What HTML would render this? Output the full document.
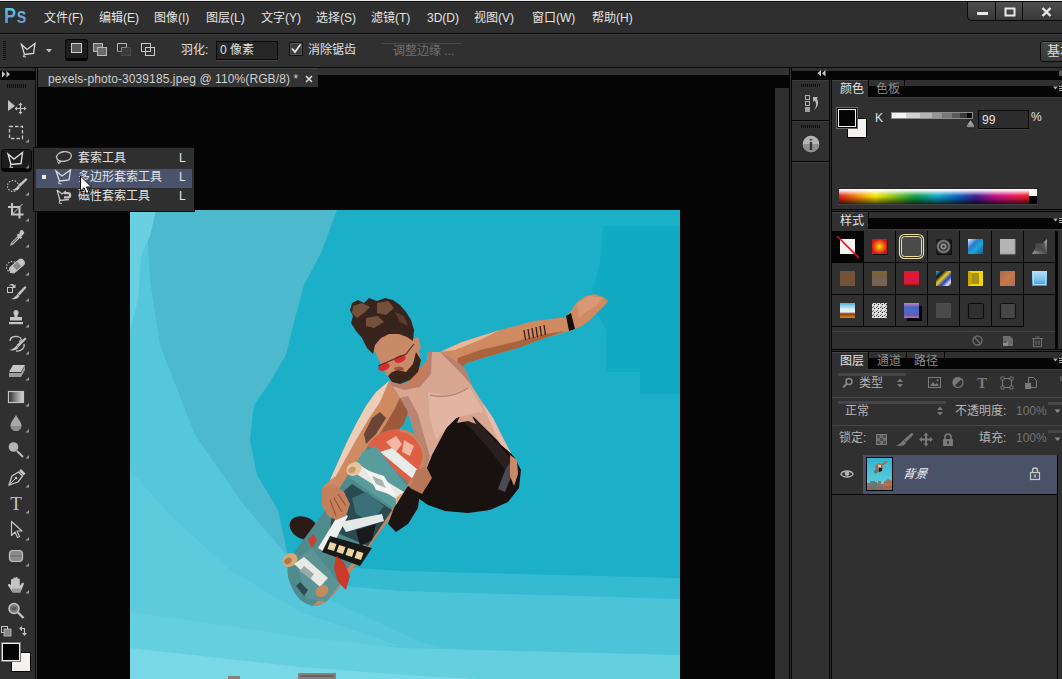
<!DOCTYPE html>
<html lang="zh-CN">
<head>
<meta charset="utf-8">
<title>Photoshop</title>
<style>
*{box-sizing:border-box;margin:0;padding:0}
html,body{width:1062px;height:679px;overflow:hidden;background:#303030}
body{position:relative;font-family:"Liberation Sans","Noto Sans CJK SC",sans-serif;font-size:12px;color:#dcdcdc}
.abs{position:absolute}
#menubar{left:0;top:0;width:1062px;height:34px;background:#2f2f2f;border-top:1px solid #ececec;border-bottom:1px solid #0c0c0c;box-shadow:inset 0 2px 0 #3a3a3a}
#menubar:before{content:"";position:absolute;left:0;top:0;width:100%;height:1px;background:#0a0a0a;z-index:1}
.mi{position:absolute;top:9px;font-size:12px;line-height:16px;color:#e4e4e4;white-space:nowrap}
#ps{left:4px;top:1px;font-size:22px;line-height:28px;font-weight:bold;color:#6aa6d6;letter-spacing:0.5px;transform:scaleX(0.82);transform-origin:0 0;background:linear-gradient(#5cc4de 30%,#6c9edc 55%);-webkit-background-clip:text;background-clip:text;-webkit-text-fill-color:transparent}
#optbar{left:0;top:34px;width:1062px;height:34px;background:#303030;border-bottom:1px solid #0a0a0a;box-shadow:inset 0 1px 0 #3c3c3c}
#toolbar{left:0;top:68px;width:35px;height:611px;background:#303030}
#canvas{left:37px;top:68px;width:753px;height:611px;background:#050505}
#tab{left:38px;top:68px;width:280px;height:19px;background:#333333;border-top:1px solid #484848;color:#cfcfcf;font-size:12px;line-height:21px;padding-left:10px;white-space:nowrap;letter-spacing:0.1px}

/* options bar */
.grip-v{position:absolute;left:3px;top:7px;width:3px;height:20px;background:repeating-linear-gradient(to bottom,#111 0 1px,#303030 1px 2px)}
.ob-lbl{position:absolute;font-size:12px;line-height:16px;color:#e0e0e0;white-space:nowrap}
#feather{left:216px;top:7px;width:62px;height:19px;background:#262626;border:1px solid #080808;box-shadow:0 1px 0 #444;font-size:12px;line-height:17px;padding-left:3px;color:#e0e0e0}
#chk{left:289px;top:8px;width:14px;height:14px;background:#3c3c3c;border:1px solid #111;box-shadow:inset 0 0 0 1px #555}
#refine{left:381px;top:9px;width:80px;height:18px;border-top:1px solid #484848;font-size:12px;line-height:15px;color:#707070;padding-left:12px;white-space:nowrap}
#basic{white-space:nowrap;overflow:hidden;left:1040px;top:7px;width:30px;height:21px;background:linear-gradient(#444,#3a3a3a);border:1px solid #0a0a0a;border-radius:3px;box-shadow:inset 0 1px 0 #5a5a5a;font-size:13px;line-height:18px;padding-left:6px;color:#e0e0e0}
#winctl{left:967px;top:2px;width:96px;height:19px;background:linear-gradient(#4e4e4e,#383838);border:1px solid #0a0a0a;border-top:none;border-radius:0 0 0 5px}
#winctl i{position:absolute;top:0;width:1px;height:18px;background:#0a0a0a}
/* toolbar */
#tb-head{left:0;top:3px;width:35px;height:9px;background:#050505}
.tool{position:absolute;left:0;width:35px;height:26px}
#vline1{left:35px;top:68px;width:1px;height:611px;background:#0a0a0a}
#vline2{left:36px;top:68px;width:1px;height:611px;background:#363636}
/* right dock */
#dock{left:790px;top:68px;width:272px;height:611px;background:#303030}
.blk{position:absolute;background:#050505}
.ptab{position:absolute;font-size:12px;line-height:16px;white-space:nowrap}
.lt{position:absolute;font-size:12px;line-height:16px;color:#b4b4b4;white-space:nowrap}
.fl{font-size:12px;line-height:16px;color:#e4e4e4;white-space:nowrap}
</style>
</head>
<body>
<div id="menubar" class="abs">
  <div id="ps" class="abs">Ps</div>
  <span class="mi" style="left:44px">文件(F)</span>
  <span class="mi" style="left:99px">编辑(E)</span>
  <span class="mi" style="left:154px">图像(I)</span>
  <span class="mi" style="left:206px">图层(L)</span>
  <span class="mi" style="left:261px">文字(Y)</span>
  <span class="mi" style="left:316px">选择(S)</span>
  <span class="mi" style="left:371px">滤镜(T)</span>
  <span class="mi" style="left:427px">3D(D)</span>
  <span class="mi" style="left:474px">视图(V)</span>
  <span class="mi" style="left:532px">窗口(W)</span>
  <span class="mi" style="left:592px">帮助(H)</span>
</div>
<div id="optbar" class="abs">
  <div class="grip-v"></div>
  <svg class="abs" style="left:18px;top:6px" width="36" height="22" viewBox="0 0 36 22">
    <path d="M3.5 4.5 L9 9.5 L17 3.5 L15.5 13.5 L6.5 14.5 Z" fill="none" stroke="#d8d8d8" stroke-width="1.3"/>
    <path d="M6.5 14 L5.5 16.5 L8 17" fill="none" stroke="#c8c8c8" stroke-width="1.1"/>
    <path d="M28 9 h6 l-3 3.5z" fill="#c8c8c8"/>
  </svg>
  <div class="abs" style="left:65px;top:5px;width:23px;height:22px;background:#1d1d1d;border:1px solid #070707;border-bottom:3px solid #050505;border-radius:3px"></div>
  <svg class="abs" style="left:65px;top:5px" width="95" height="22" viewBox="0 0 95 22">
    <rect x="6.5" y="4.500" width="10" height="9" fill="#5a5a5a" stroke="#cfcfcf"/>
    <rect x="28.500" y="4.500" width="9" height="8" fill="#6a6a6a" stroke="#b8b8b8"/>
    <rect x="32.500" y="8.500" width="9" height="8" fill="#6a6a6a" stroke="#b8b8b8"/>
    <rect x="56.500" y="8.500" width="9" height="8" fill="#3c3c3c" stroke="#4a4a4a"/>
    <path d="M52.500 12.500 v-8 h9 v4" fill="none" stroke="#b8b8b8"/>
    <path d="M52.500 12.500 h4 v-4 h5" fill="none" stroke="#8a8a8a"/>
    <rect x="76.500" y="4.500" width="9" height="8" fill="none" stroke="#c8c8c8"/>
    <rect x="80.500" y="8.500" width="9" height="8" fill="none" stroke="#c8c8c8"/>
  </svg>
  <span class="ob-lbl" style="left:181px;top:8px">羽化:</span>
  <div id="feather" class="abs">0 像素</div>
  <div id="chk" class="abs"><svg width="12" height="12" viewBox="0 0 12 12" style="position:absolute;left:0;top:0"><path d="M2 5.500 L5 9 L10.500 1.500" fill="none" stroke="#e6e6e6" stroke-width="1.800"/></svg></div>
  <span class="ob-lbl" style="left:308px;top:8px">消除锯齿</span>
  <div id="refine" class="abs">调整边缘 ...</div>
  <div id="basic" class="abs">基本</div>
</div>
<div id="winctl" class="abs"><i style="left:27px"></i><i style="left:54px"></i>
  <svg width="94" height="18" viewBox="0 0 94 18" style="position:absolute;left:0;top:0">
    <rect x="9" y="10" width="11" height="3" fill="#e8e8e8"/>
    <rect x="37.500" y="6.500" width="9" height="7" fill="none" stroke="#e8e8e8" stroke-width="2"/>
    <path d="M74.500 6 l8 8 M82.500 6 l-8 8" stroke="#e8e8e8" stroke-width="2.400"/>
  </svg>
</div>
<div id="toolbar" class="abs"></div>
<div class="blk" style="left:0;top:71px;width:35px;height:9px"></div>
<div id="vline1" class="abs"></div><div id="vline2" class="abs"></div>
<svg class="abs" style="left:0;top:68px" width="35" height="611" viewBox="0 68 35 611">
<path d="M2 71 v6.500 l3.500 -3.250z M6.500 71 v6.500 l3.500 -3.250z" fill="#c4c4c4"/>
<path d="M7.500 84v4M9.500 84v4M11.500 84v4M13.500 84v4M15.500 84v4M17.500 84v4M19.500 84v4M21.500 84v4M23.500 84v4M25.500 84v4" stroke="#0e0e0e"/>
<!-- move -->
<path d="M8 100 V111 L15 106z" fill="#c4c4c4"/><path d="M20.500 104 v9 M16 108.500 h9" stroke="#c4c4c4" stroke-width="1.200"/><path d="M20.500 102.500 l2 2.500 h-4z M20.500 114.500 l2 -2.500 h-4z M14.500 108.500 l2.500 -2 v4z M26.500 108.500 l-2.500 -2 v4z" fill="#c4c4c4"/>
<!-- marquee -->
<rect x="9.500" y="126.500" width="13" height="12" fill="none" stroke="#c4c4c4" stroke-width="1.300" stroke-dasharray="3.500 2"/><path d="M29 139 v3.500 h-3.500z" fill="#9a9a9a"/>
<!-- lasso active -->
<rect x="1.500" y="149.500" width="30" height="22" rx="3" fill="#1d1d1d" stroke="#070707"/><rect x="2" y="168" width="29" height="3" fill="#050505"/>
<path d="M8 154 L14 159 L22.500 152.500 L21 163.500 L11 164.500 Z" fill="none" stroke="#dcdcdc" stroke-width="1.400"/><path d="M11 164 L10 167 L13 167.500" fill="none" stroke="#cfcfcf" stroke-width="1.100"/><path d="M29 165 v3.500 h-3.500z" fill="#888"/>
<!-- quick select -->
<circle cx="13" cy="186" r="5.500" fill="none" stroke="#c4c4c4" stroke-width="1.100" stroke-dasharray="1.500 1.500"/><path d="M26 178 L27.500 179.500 L20 187 L18 185z" fill="#c4c4c4"/><path d="M18 185.500 L20 187.500 C18.500 190.500 15 191 12 190 C15 189 16.500 187.500 18 185.500z" fill="#c4c4c4"/><path d="M29 192 v3.500 h-3.500z" fill="#9a9a9a"/>
<!-- crop -->
<path d="M12 203 V214.500 H23.500 M8 207 H19.500 V218.500" fill="none" stroke="#c4c4c4" stroke-width="2"/><path d="M12.500 214 L22.500 204" stroke="#c4c4c4" stroke-width="1"/><path d="M29 218 v3.500 h-3.500z" fill="#9a9a9a"/>
<!-- eyedropper -->
<path d="M20 231 a2.300 2.300 0 0 1 3.500 3.300 l-2.300 2.300 l1 1 l-1.500 1.500 l-1 -1 l-6.500 6.500 l-3.200 1.200 l1.200 -3.200 l6.500 -6.500 l-1 -1 l1.500 -1.500 l1 1z" fill="#c4c4c4"/><path d="M17.500 238 l-5.500 5.500" stroke="#303030" stroke-width="1"/><path d="M29 244 v3.500 h-3.500z" fill="#9a9a9a"/>
<!-- healing -->
<circle cx="12" cy="267" r="5.500" fill="none" stroke="#c4c4c4" stroke-width="1.100" stroke-dasharray="1.500 1.500"/><rect x="8" y="262" width="18" height="8" rx="4" fill="#c4c4c4" transform="rotate(-40 17 266)"/><rect x="14" y="263" width="6" height="6" fill="#8a8a8a" transform="rotate(-40 17 266)"/><path d="M29 272 v3.500 h-3.500z" fill="#9a9a9a"/>
<!-- brush -->
<rect x="7.500" y="287.500" width="5" height="5" fill="none" stroke="#c4c4c4"/><path d="M9 286 C10 283.500 13 283.500 14.500 285.500 l1 -1.500 v4 h-4 l1.500 -1 C12 285 10.500 285 9 286z" fill="#c4c4c4"/><path d="M25 286 L26.500 287.500 L19.500 295.500 L17.500 293.500z" fill="#c4c4c4"/><path d="M17.500 294 L19.500 296 C18 299 14.500 299.500 11 299 C14 298 15.500 296.500 17.500 294z" fill="#c4c4c4"/><path d="M29 298 v3.500 h-3.500z" fill="#9a9a9a"/>
<!-- stamp -->
<path d="M16 310 a2.600 2.600 0 0 1 2.600 2.600 c0 1.800 -1.200 2.400 -1.200 4.400 h4.600 v3.500 h-12 v-3.500 h4.600 c0 -2 -1.200 -2.600 -1.200 -4.400 a2.600 2.600 0 0 1 2.600 -2.600z" fill="#c4c4c4"/><rect x="9" y="322" width="14" height="2.200" fill="#c4c4c4"/><path d="M29 324 v3.500 h-3.500z" fill="#9a9a9a"/>
<!-- history brush -->
<path d="M10 341 C10 337 15 335.500 19 337 C22 338 22 341 19 341.500 M24 344 C25 348 21 351.500 16 351" fill="none" stroke="#c4c4c4" stroke-width="1.300"/><path d="M25 337.500 L26.500 339 L18.500 347 L16.500 345z" fill="#c4c4c4"/><path d="M16.500 345.500 L18.500 347.500 C17 350 13.500 351 9 350 C12 349.500 14.500 348 16.500 345.500z" fill="#c4c4c4"/><path d="M29 351 v3.500 h-3.500z" fill="#9a9a9a"/>
<!-- eraser -->
<path d="M13 365 H25 L21 372 H9z" fill="#c4c4c4"/><path d="M9 373 H21 L25 366 V370 L21 377 H9z" fill="#9c9c9c"/><path d="M29 377 v3.500 h-3.500z" fill="#9a9a9a"/>
<!-- gradient -->
<defs><linearGradient id="tg" x1="0" x2="1"><stop offset="0" stop-color="#2a2a2a"/><stop offset="0.500" stop-color="#8a8a8a"/><stop offset="1" stop-color="#d8d8d8"/></linearGradient></defs>
<rect x="8.500" y="391.500" width="15" height="11" fill="url(#tg)" stroke="#c4c4c4" stroke-width="1.200"/><path d="M29 403 v3.500 h-3.500z" fill="#9a9a9a"/>
<!-- blur -->
<path d="M16 415 C18 419 21.500 422 21.500 425.500 a5.500 5.500 0 0 1 -11 0 C10.500 422 14 419 16 415z" fill="#a8a8a8"/><path d="M10.600 426 a5.500 5.500 0 0 0 10.800 0z" fill="#8a8a8a"/><path d="M29 429 v3.500 h-3.500z" fill="#9a9a9a"/>
<!-- dodge -->
<circle cx="13.500" cy="447" r="4.800" fill="#b4b4b4"/><path d="M17 451 L23 457" stroke="#c4c4c4" stroke-width="1.800"/><path d="M29 455 v3.500 h-3.500z" fill="#9a9a9a"/>
<!-- pen -->
<path d="M21 469 L25.500 473.500 L23.500 475.500 L19 471z" fill="#c4c4c4"/><path d="M18.500 472 L22.500 476 L18 482 L9 485 L12 476z" fill="none" stroke="#c4c4c4" stroke-width="1.300"/><path d="M9.500 484.500 L15.500 478.500" stroke="#c4c4c4" stroke-width="1"/><circle cx="16" cy="478" r="1.300" fill="#c4c4c4"/><path d="M29 484 v3.500 h-3.500z" fill="#9a9a9a"/>
<!-- type -->
<text x="16" y="509.500" text-anchor="middle" font-family="'Liberation Serif',serif" font-size="19" fill="#c4c4c4">T</text><path d="M29 510 v3.500 h-3.500z" fill="#9a9a9a"/>
<!-- path select -->
<path d="M11.500 521.500 V535.500 L15 532 L17.500 537.500 L19.500 536.500 L17 531 H22z" fill="#2a2a2a" stroke="#c4c4c4" stroke-width="1.200" stroke-linejoin="round"/><path d="M29 537 v3.500 h-3.500z" fill="#9a9a9a"/>
<!-- shape -->
<rect x="9.500" y="550.500" width="13" height="11" rx="3.500" fill="#8a8a8a" stroke="#c4c4c4" stroke-width="1.200"/><path d="M10 556 h12" stroke="#6a6a6a"/><path d="M29 563 v3.500 h-3.500z" fill="#9a9a9a"/>
<!-- hand -->
<path d="M11 585 V580 a1.100 1.100 0 0 1 2.200 0 V584 V578.500 a1.100 1.100 0 0 1 2.200 0 V584 V578 a1.100 1.100 0 0 1 2.200 0 V584 V579.500 a1.100 1.100 0 0 1 2.200 0 V586 L21.500 583.500 a1.200 1.200 0 0 1 2.300 0.800 L21.500 590 Q20.500 592.500 18 592.500 H14 Q12 592.500 11 590 L8 585.500 a1.200 1.200 0 0 1 2 -1.200z" fill="#c4c4c4"/><rect x="12" y="588.500" width="9" height="4" fill="#9a9a9a"/><path d="M29 590 v3.500 h-3.500z" fill="#9a9a9a"/>
<!-- zoom -->
<circle cx="14" cy="608.500" r="5" fill="#7a7a7a" stroke="#c4c4c4" stroke-width="1.500"/><rect x="11.500" y="607" width="5" height="3" fill="#5a5a5a"/><path d="M18 612.500 L23.500 618" stroke="#c4c4c4" stroke-width="2.400"/>
<!-- default / swap -->
<rect x="1.500" y="626.500" width="6" height="6" fill="#303030" stroke="#c4c4c4"/><rect x="4" y="629" width="7" height="7" fill="#888" stroke="#c4c4c4" stroke-width="0.800"/>
<path d="M21 628.500 h3.500 v5" fill="none" stroke="#c4c4c4" stroke-width="1.200"/><path d="M19 628.500 l3 -2.500 v5z M24.500 636 l-2.500 -3 h5z" fill="#c4c4c4"/>
<!-- fg/bg -->
<rect x="11.500" y="652.500" width="19" height="19" fill="#f4f3f0" stroke="#050505"/>
<rect x="1.500" y="642.500" width="19" height="19" fill="#050505" stroke="#7a7a7a"/><rect x="2.500" y="643.500" width="17" height="17" fill="none" stroke="#f0f0f0"/>
</svg>

<div id="canvas" class="abs"></div>

<!-- canvas chrome -->
<div class="abs" style="left:38px;top:68px;width:751px;height:7px;background:#323232"></div>
<div class="abs" style="left:775px;top:88px;width:14px;height:591px;background:#2e2e2e"></div>
<div class="abs" style="left:0;top:67px;width:1062px;height:1px;background:#080808"></div>
<!-- dock -->
<div id="dock" class="abs"></div>
<div class="blk" style="left:789px;top:68px;width:1px;height:611px"></div>
<div class="blk" style="left:791px;top:68px;width:1px;height:611px"></div>
<div class="abs" style="left:790px;top:68px;width:1px;height:611px;background:#2d2d2d"></div>
<div class="blk" style="left:792px;top:71px;width:270px;height:9px"></div>
<svg class="abs" style="left:817px;top:70px" width="9" height="7" viewBox="0 0 9 7"><path d="M4 0 v6.500 l-3.500 -3.250z M8.500 0 v6.500 l-3.500 -3.250z" fill="#c8c8c8"/></svg>
<div class="abs" style="left:1059px;top:71px;width:3px;height:5px;background:#555"></div>
<!-- icon strip -->
<div class="abs" style="left:792px;top:80px;width:37px;height:1px;background:#3c3c3c"></div>
<div class="blk" style="left:829px;top:80px;width:1px;height:599px"></div>
<div class="blk" style="left:831px;top:80px;width:1px;height:599px"></div>
<div class="abs" style="left:830px;top:80px;width:1px;height:599px;background:#2d2d2d"></div>
<div class="abs" style="left:801px;top:84px;width:20px;height:3px;background:repeating-linear-gradient(to right,#0c0c0c 0 1px,transparent 1px 2px)"></div>
<div class="blk" style="left:792px;top:120px;width:37px;height:1px"></div>
<div class="abs" style="left:792px;top:121px;width:37px;height:1px;background:#3c3c3c"></div>
<div class="abs" style="left:801px;top:125px;width:20px;height:3px;background:repeating-linear-gradient(to right,#0c0c0c 0 1px,transparent 1px 2px)"></div>
<div class="blk" style="left:792px;top:161px;width:37px;height:1px"></div>
<div class="abs" style="left:792px;top:162px;width:37px;height:1px;background:#3c3c3c"></div>
<svg class="abs" style="left:803px;top:93px" width="18" height="22" viewBox="0 0 18 22">
  <rect x="2.500" y="2.500" width="4" height="4" fill="none" stroke="#b0b0b0"/>
  <rect x="2.500" y="8.500" width="4" height="4" fill="none" stroke="#b0b0b0"/>
  <rect x="2" y="14" width="5" height="5" fill="#a0a0a0"/>
  <path d="M10 4 h5 l-1.200 1.600 c2.500 4 1.500 8.500 -2.800 11.400 c2.600 -3.600 2.700 -7 0.600 -9.600 l-1.600 1.600z" fill="#b8b8b8"/>
</svg>
<svg class="abs" style="left:802px;top:135px" width="18" height="18" viewBox="0 0 18 18">
  <circle cx="9" cy="9" r="8.300" fill="#b4b4b4"/>
  <path d="M0.700 9 a8.300 8.300 0 0 0 16.600 0z" fill="#8e8e8e"/>
  <text x="9" y="14.600" text-anchor="middle" font-family="'Liberation Sans',sans-serif" font-size="15.500" font-weight="bold" fill="#2f2f2f">i</text>
</svg>
<!-- color panel -->
<div class="blk" style="left:868px;top:86px;width:194px;height:11px"></div>
<div class="abs" style="left:868px;top:97px;width:194px;height:1px;background:#3e3e3e"></div>
<div class="abs" style="left:832px;top:80px;width:36px;height:1px;background:#444"></div>
<div class="blk" style="left:868px;top:80px;width:1px;height:17px"></div>
<span class="ptab" style="left:840px;top:81px;color:#e2e2e2">颜色</span>
<span class="ptab" style="left:876px;top:81px;color:#8c8c8c">色板</span>
<div class="blk" style="left:904px;top:80px;width:1px;height:6px"></div>
<svg class="abs" style="left:1053px;top:85px" width="9" height="8" viewBox="0 0 9 8"><path d="M0 1.500 h5 l-2.500 3z" fill="#b0b0b0"/><path d="M6 1.500h3M6 3.500h3M6 5.500h3" stroke="#b0b0b0"/></svg>
<div class="abs" style="left:836px;top:107px;width:22px;height:22px;background:#050505;border:1px solid #6a6a6a;box-shadow:inset 0 0 0 1px #050505,inset 0 0 0 2px #f4f4f4;z-index:2"></div>
<div class="abs" style="left:847px;top:118px;width:20px;height:20px;background:#f4f3f0;border:1px solid #050505;z-index:1"></div>
<span class="abs" style="left:875px;top:110px;font-size:12px;line-height:16px;color:#e2e2e2">K</span>
<div class="abs" style="left:891px;top:112px;width:82px;height:7px;border:1px solid #8c8c8c;background:linear-gradient(to right,#f4f4f0 0 14px,#d2d2d2 14px 28px,#b4b4b4 28px 40px,#969696 40px 50px,#787878 50px 60px,#5a5a5a 60px 68px,#3a3a3a 68px 75px,#080808 75px 80px)"></div>
<svg class="abs" style="left:964px;top:119px" width="13" height="10" viewBox="0 0 13 10"><path d="M6.500 0.500 L11 7 Q11 8.800 9 8.800 H4 Q2 8.800 2 7z" fill="#8a8a8a" stroke="#1a1a1a" stroke-width="0.800"/><path d="M6.500 1.500 L9.300 5.500 H3.700z" fill="#a8a8a8"/></svg>
<div class="abs" style="left:978px;top:110px;width:51px;height:19px;background:#2c2c2c;border:1px solid #070707;box-shadow:0 1px 0 #444,1px 0 0 #3a3a3a;font-size:12px;line-height:18px;padding-left:3px;color:#e2e2e2">99</div>
<span class="abs" style="left:1031px;top:109px;font-size:12px;line-height:16px;color:#e2e2e2">%</span>
<div class="abs" style="left:838px;top:188px;width:200px;height:17px;border-bottom:1px solid #444;border-top:1px solid #262626"></div>
<svg class="abs" style="left:839px;top:189px" width="198" height="15" viewBox="0 0 198 15" preserveAspectRatio="none">
  <defs>
    <linearGradient id="hue" x1="0" x2="1" y1="0" y2="0">
      <stop offset="0" stop-color="#e8201c"/><stop offset="0.10" stop-color="#f08a10"/><stop offset="0.19" stop-color="#f6e800"/>
      <stop offset="0.30" stop-color="#7fc020"/><stop offset="0.40" stop-color="#10a048"/><stop offset="0.52" stop-color="#10a8c8"/>
      <stop offset="0.63" stop-color="#1060c0"/><stop offset="0.72" stop-color="#402090"/><stop offset="0.82" stop-color="#c01088"/>
      <stop offset="0.92" stop-color="#e81860"/><stop offset="1" stop-color="#e8201c"/>
    </linearGradient>
    <linearGradient id="wb" x1="0" x2="0" y1="0" y2="1">
      <stop offset="0" stop-color="#fff" stop-opacity="1"/><stop offset="0.12" stop-color="#fff" stop-opacity="0.85"/><stop offset="0.45" stop-color="#fff" stop-opacity="0"/>
      <stop offset="0.5" stop-color="#000" stop-opacity="0"/><stop offset="1" stop-color="#000" stop-opacity="0.720"/>
    </linearGradient>
  </defs>
  <rect width="190" height="15" fill="url(#hue)"/><rect width="190" height="15" fill="url(#wb)"/>
  <rect x="190" width="8" height="7" fill="#f8f8f6"/><rect x="190" y="7" width="8" height="8" fill="#050505"/>
</svg>
<div class="blk" style="left:832px;top:209px;width:230px;height:1px"></div>
<div class="blk" style="left:832px;top:211px;width:230px;height:1px"></div>
<!-- styles panel -->
<div class="blk" style="left:868px;top:218px;width:194px;height:11px"></div>
<div class="abs" style="left:868px;top:229px;width:194px;height:1px;background:#3e3e3e"></div>
<div class="abs" style="left:832px;top:212px;width:36px;height:1px;background:#444"></div>
<div class="blk" style="left:868px;top:212px;width:1px;height:17px"></div>
<span class="ptab" style="left:840px;top:213px;color:#e2e2e2">样式</span>
<svg class="abs" style="left:1053px;top:217px" width="9" height="8" viewBox="0 0 9 8"><path d="M0 1.500 h5 l-2.500 3z" fill="#b0b0b0"/><path d="M6 1.500h3M6 3.500h3M6 5.500h3" stroke="#b0b0b0"/></svg>
<div class="blk" style="left:832px;top:231px;width:31px;height:31px"></div>
<div class="blk" style="left:863px;top:231px;width:1px;height:96px"></div>
<div class="blk" style="left:895px;top:231px;width:1px;height:96px"></div>
<div class="blk" style="left:927px;top:231px;width:1px;height:96px"></div>
<div class="blk" style="left:959px;top:231px;width:1px;height:96px"></div>
<div class="blk" style="left:991px;top:231px;width:1px;height:96px"></div>
<div class="blk" style="left:1023px;top:231px;width:1px;height:96px"></div>
<div class="blk" style="left:1055px;top:231px;width:3px;height:118px"></div>
<div class="blk" style="left:832px;top:262px;width:226px;height:1px"></div>
<div class="blk" style="left:832px;top:294px;width:226px;height:1px"></div>
<div class="blk" style="left:832px;top:326px;width:192px;height:1px"></div>
<svg class="abs" style="left:832px;top:231px" width="226" height="96" viewBox="0 0 226 96">
<defs>
<radialGradient id="s1"><stop offset="0" stop-color="#ffe000"/><stop offset="0.450" stop-color="#f08010"/><stop offset="1" stop-color="#d81818"/></radialGradient>
<radialGradient id="s3"><stop offset="0" stop-color="#222"/><stop offset="0.300" stop-color="#9a9a9a"/><stop offset="0.500" stop-color="#2a2a2a"/><stop offset="0.750" stop-color="#8a8a8a"/><stop offset="1" stop-color="#1a1a1a"/></radialGradient>
<linearGradient id="s4" x1="0" y1="0" x2="1" y2="1"><stop offset="0" stop-color="#e8f4ff"/><stop offset="0.350" stop-color="#2a7ad0"/><stop offset="0.600" stop-color="#18a8d0"/><stop offset="1" stop-color="#2050a0"/></linearGradient>
<linearGradient id="s6" x1="0" y1="1" x2="1" y2="0"><stop offset="0" stop-color="#9a9a9a"/><stop offset="0.500" stop-color="#4a4a4a"/><stop offset="1" stop-color="#b0b0b0"/></linearGradient>
<linearGradient id="r2a" x1="0" y1="0" x2="0" y2="1"><stop offset="0" stop-color="#7a6a30"/><stop offset="0.350" stop-color="#7a5a40"/><stop offset="0.600" stop-color="#6a6a5a"/><stop offset="1" stop-color="#8a5a40"/></linearGradient>
<linearGradient id="r2b" x1="0" y1="0" x2="0" y2="1"><stop offset="0" stop-color="#c02060"/><stop offset="0.250" stop-color="#e81818"/><stop offset="0.550" stop-color="#d01860"/><stop offset="0.800" stop-color="#e02020"/><stop offset="1" stop-color="#701010"/></linearGradient>
<linearGradient id="r2c" x1="0" y1="0" x2="1" y2="1"><stop offset="0" stop-color="#20c8d8"/><stop offset="0.250" stop-color="#101020"/><stop offset="0.450" stop-color="#f0d020"/><stop offset="0.650" stop-color="#2040c0"/><stop offset="0.850" stop-color="#e8e8e8"/><stop offset="1" stop-color="#101010"/></linearGradient>
<linearGradient id="r2e" x1="0" y1="0" x2="1" y2="1"><stop offset="0" stop-color="#a06a50"/><stop offset="0.500" stop-color="#c87848"/><stop offset="1" stop-color="#a87060"/></linearGradient>
<linearGradient id="r2f" x1="0" y1="0" x2="0" y2="1"><stop offset="0" stop-color="#b8e0f8"/><stop offset="0.600" stop-color="#78c0e8"/><stop offset="1" stop-color="#4890c0"/></linearGradient>
<linearGradient id="r3a" x1="0" y1="0" x2="0" y2="1"><stop offset="0" stop-color="#50b0e0"/><stop offset="0.400" stop-color="#d8ecf4"/><stop offset="0.600" stop-color="#f0f0e8"/><stop offset="0.720" stop-color="#804018"/><stop offset="1" stop-color="#e08810"/></linearGradient>
<linearGradient id="r3c" x1="0" y1="0" x2="0" y2="1"><stop offset="0" stop-color="#c080c0"/><stop offset="0.300" stop-color="#5060c0"/><stop offset="0.550" stop-color="#4070c8"/><stop offset="0.800" stop-color="#7050b0"/><stop offset="1" stop-color="#c070b0"/></linearGradient>
<pattern id="noise" width="4" height="4" patternUnits="userSpaceOnUse"><rect width="4" height="4" fill="#d8d8d8"/><rect width="1" height="1" fill="#555"/><rect x="2" y="1" width="1" height="1" fill="#222"/><rect x="1" y="3" width="1" height="1" fill="#777"/><rect x="3" y="2" width="1" height="1" fill="#fff"/></pattern>
</defs>
<!-- row1 -->
<rect x="8" y="8" width="15" height="15" fill="#f6f4f2"/><path d="M5 5 L27 27" stroke="#e01020" stroke-width="1.600"/>
<rect x="41" y="9" width="15" height="15" fill="#101010"/><rect x="40" y="8" width="15" height="15" fill="url(#s1)"/>
<rect x="67.500" y="3.500" width="24" height="24" rx="5" fill="none" stroke="#e8dcaa" stroke-width="1.200"/><rect x="69.500" y="5.500" width="20" height="20" rx="3" fill="#4a4a4a" stroke="#e8dcaa" stroke-width="1"/>
<rect x="105" y="9" width="15" height="15" fill="#0c0c0c"/><rect x="104" y="8" width="15" height="15" fill="url(#s3)"/>
<rect x="136" y="8" width="15" height="15" fill="url(#s4)"/>
<rect x="168" y="8" width="15" height="15" fill="#b4b4b4"/><path d="M168 23h15v-15" fill="none" stroke="#989898"/>
<path d="M200 23 L206 13 L210 13 L215 8 V23z" fill="url(#s6)"/><rect x="203" y="12" width="10" height="8" fill="#4a4a4a" opacity="0.700"/>
<!-- row2 -->
<rect x="8" y="40" width="15" height="15" fill="#735238"/>
<rect x="40" y="40" width="15" height="15" fill="url(#r2a)"/>
<rect x="72" y="40" width="15" height="15" fill="url(#r2b)"/>
<rect x="104" y="40" width="15" height="15" fill="url(#r2c)"/>
<rect x="136" y="40" width="15" height="15" fill="#f0d800"/><rect x="140" y="42" width="7" height="11" fill="#a89010"/><path d="M136 40l4 2v11l-4 2z" fill="#c8a800"/>
<rect x="168" y="40" width="15" height="15" fill="url(#r2e)"/>
<rect x="200" y="40" width="15" height="15" fill="url(#r2f)"/><rect x="201.500" y="41.500" width="12" height="12" fill="none" stroke="#a8d8f4"/>
<!-- row3 -->
<rect x="8" y="72" width="15" height="15" fill="url(#r3a)"/>
<rect x="40" y="72" width="15" height="15" fill="url(#noise)"/>
<rect x="75" y="75" width="15" height="15" fill="#050505"/><rect x="72" y="72" width="15" height="15" fill="url(#r3c)"/>
<rect x="104" y="72" width="15" height="15" fill="#4a4a4a"/>
<rect x="136.500" y="72.500" width="15" height="15" rx="1.500" fill="#303030" stroke="#0c0c0c" stroke-width="1.200"/>
<rect x="168.500" y="72.500" width="15" height="15" rx="1.500" fill="#464646" stroke="#141414" stroke-width="1.200"/>
</svg>
<div class="abs" style="left:832px;top:331px;width:223px;height:1px;background:#444"></div>
<div class="blk" style="left:832px;top:349px;width:230px;height:1px"></div>
<div class="blk" style="left:832px;top:351px;width:230px;height:1px"></div>
<!-- styles footer icons -->
<svg class="abs" style="left:970px;top:333px" width="80" height="16" viewBox="0 0 80 16">
  <circle cx="7.500" cy="7.500" r="4.500" fill="none" stroke="#6c6c6c" stroke-width="1.400"/><path d="M4.300 4.300 L10.700 10.700" stroke="#6c6c6c" stroke-width="1.400"/>
  <path d="M33 3 h7 l3 3 v7 h-10z" fill="#6c6c6c"/><path d="M33 8 h5 v5 h-5z" fill="#8a8a8a"/><path d="M32 9 h5" stroke="#2f2f2f"/>
  <path d="M62 5.500 h11 M65.500 4 h4 M63.500 6 v7.500 h8 v-7.500 M66 7.500 v4.500 M69 7.500 v4.500" fill="none" stroke="#6c6c6c" stroke-width="1.200"/>
</svg>
<!-- layers panel -->
<div class="blk" style="left:868px;top:358px;width:194px;height:11px"></div>
<div class="abs" style="left:868px;top:369px;width:194px;height:1px;background:#3e3e3e"></div>
<div class="abs" style="left:832px;top:352px;width:36px;height:1px;background:#444"></div>
<div class="blk" style="left:868px;top:352px;width:1px;height:17px"></div>
<span class="ptab" style="left:840px;top:353px;color:#e2e2e2">图层</span>
<span class="ptab" style="left:877px;top:353px;color:#8c8c8c">通道</span>
<div class="blk" style="left:906px;top:352px;width:1px;height:6px"></div>
<span class="ptab" style="left:914px;top:353px;color:#8c8c8c">路径</span>
<div class="blk" style="left:944px;top:352px;width:1px;height:6px"></div>
<svg class="abs" style="left:1053px;top:357px" width="9" height="8" viewBox="0 0 9 8"><path d="M0 1.500 h5 l-2.500 3z" fill="#b0b0b0"/><path d="M6 1.500h3M6 3.500h3M6 5.500h3" stroke="#b0b0b0"/></svg>
<div class="blk" style="left:906px;top:352px;width:1px;height:6px"></div>
<div class="abs" style="left:838px;top:373px;width:68px;height:3px;background:#464646"></div>
<svg class="abs" style="left:842px;top:377px" width="12" height="12" viewBox="0 0 12 12"><circle cx="7" cy="4.500" r="3" fill="none" stroke="#8a8a8a" stroke-width="1.500"/><path d="M4.800 6.800 L1.200 10.400" stroke="#8a8a8a" stroke-width="2"/></svg>
<span class="lt" style="left:859px;top:375px">类型</span>
<svg class="abs" style="left:896px;top:378px" width="8" height="10" viewBox="0 0 8 10"><path d="M1 4 L4 0.500 L7 4z M1 6 L4 9.500 L7 6z" fill="#7a7a7a"/></svg>
<svg class="abs" style="left:927px;top:376px" width="112" height="14" viewBox="0 0 112 14">
  <rect x="1.500" y="1.500" width="12" height="10" fill="none" stroke="#7a7a7a" stroke-width="1"/><path d="M3 10 L6 6 L8 8.500 L10 7 L12 10z" fill="#7a7a7a"/><circle cx="10.500" cy="4.200" r="1" fill="#7a7a7a"/>
  <circle cx="31" cy="6.500" r="5" fill="none" stroke="#7a7a7a" stroke-width="1.200"/><path d="M27.400 10 A5 5 0 0 1 34.500 2.900z" fill="#7a7a7a"/>
  <text x="55" y="12.300" text-anchor="middle" font-family="'Liberation Serif',serif" font-size="15" font-weight="bold" fill="#7a7a7a">T</text>
  <rect x="75.500" y="2.500" width="9" height="9" fill="none" stroke="#7a7a7a" stroke-width="1"/><rect x="74" y="1" width="3" height="3" fill="#2f2f2f" stroke="#7a7a7a" stroke-width="0.800"/><rect x="83" y="1" width="3" height="3" fill="#2f2f2f" stroke="#7a7a7a" stroke-width="0.800"/><rect x="74" y="10" width="3" height="3" fill="#2f2f2f" stroke="#7a7a7a" stroke-width="0.800"/><rect x="83" y="10" width="3" height="3" fill="#2f2f2f" stroke="#7a7a7a" stroke-width="0.800"/>
  <path d="M101.500 1.500 h5 l3 3 v7 h-8z" fill="none" stroke="#7a7a7a"/><rect x="98" y="7" width="6" height="6" fill="#7a7a7a"/>
</svg>
<div class="abs" style="left:1060px;top:376px;width:2px;height:5px;background:#555"></div>
<div class="abs" style="left:832px;top:397px;width:230px;height:1px;background:#454545"></div>
<div class="abs" style="left:838px;top:401px;width:108px;height:3px;background:#464646"></div>
<span class="lt" style="left:845px;top:403px">正常</span>
<svg class="abs" style="left:936px;top:406px" width="8" height="10" viewBox="0 0 8 10"><path d="M1 4 L4 0.500 L7 4z M1 6 L4 9.500 L7 6z" fill="#7a7a7a"/></svg>
<span class="lt" style="left:955px;top:403px">不透明度:</span>
<span class="lt" style="left:1016px;top:403px;color:#747474">100%</span>
<div class="abs" style="left:1048px;top:402px;width:14px;height:3px;background:#464646"></div>
<svg class="abs" style="left:1054px;top:409px" width="7" height="5" viewBox="0 0 7 5"><path d="M0.500 0.500h6l-3 3.500z" fill="#8a8a8a"/></svg>
<div class="abs" style="left:832px;top:425px;width:230px;height:1px;background:#454545"></div>
<span class="lt" style="left:839px;top:430px">锁定:</span>
<svg class="abs" style="left:875px;top:432px" width="80" height="15" viewBox="0 0 80 15">
  <rect x="1.500" y="2.500" width="10" height="10" fill="#6e6e6e" stroke="#7c7c7c"/><path d="M2 3h3v3h-3z M8 3h3v3h-3z M5 6h3v3h-3z M2 9h3v3h-3z M8 9h3v3h-3z" fill="#4e4e4e"/>
  <path d="M36.800 0.800 L38.500 2.500 L31 10 L28.800 7.800z" fill="#7a7a7a"/><path d="M28.300 8 L31 10.700 C29.500 14 25.500 14.300 21 13.600 C24.500 12.600 26 11 28.300 8z" fill="#7a7a7a"/>
  <path d="M51 1 L53.500 4 H52 V7 H55 V5.500 L58 8 L55 10.500 V9 H52 V12 H53.500 L51 15 L48.500 12 H50 V9 H47 V10.500 L44 8 L47 5.500 V7 H50 V4 H48.500z" fill="#7a7a7a" transform="translate(0,-0.500)"/>
  <rect x="68" y="7" width="10" height="7" rx="1" fill="#7a7a7a"/><path d="M70 7 V5 a3 3 0 0 1 6 0 V7" fill="none" stroke="#7a7a7a" stroke-width="1.600"/><rect x="72.200" y="9" width="1.600" height="3" fill="#2f2f2f"/>
</svg>
<span class="lt" style="left:979px;top:430px">填充:</span>
<span class="lt" style="left:1016px;top:430px;color:#747474">100%</span>
<div class="abs" style="left:1048px;top:430px;width:14px;height:3px;background:#464646"></div>
<svg class="abs" style="left:1054px;top:437px" width="7" height="5" viewBox="0 0 7 5"><path d="M0.500 0.500h6l-3 3.500z" fill="#8a8a8a"/></svg>
<!-- layer row -->
<div class="abs" style="left:863px;top:455px;width:194px;height:39px;background:#4a5268"></div>
<div class="blk" style="left:832px;top:494px;width:226px;height:1px"></div>
<div class="blk" style="left:1057px;top:455px;width:1px;height:224px"></div>
<svg class="abs" style="left:840px;top:468px" width="14" height="12" viewBox="0 0 14 12"><path d="M0.800 6 C3 2 11 2 13.200 6 C11 10 3 10 0.800 6z" fill="none" stroke="#b4b4b4" stroke-width="1.300"/><circle cx="7" cy="5.600" r="2.300" fill="#b4b4b4"/></svg>
<svg class="abs" style="left:866px;top:457px" width="27" height="34" viewBox="0 0 27 34">
  <defs><linearGradient id="thsky" x1="0" y1="0" x2="0" y2="1"><stop offset="0" stop-color="#2eb4cc"/><stop offset="0.700" stop-color="#58c8dc"/><stop offset="1" stop-color="#8adce8"/></linearGradient></defs>
  <rect x="0.500" y="0.500" width="26" height="33" fill="url(#thsky)" stroke="#050505"/>
  <path d="M9 9 L12 6 L15 7 L21 4 L21 5.500 L16 9 L17 12 L14 14 L11 16 L9 17 L8 15 L10 12z" fill="#a06a50"/><path d="M13 10 l3 1 l0 3 l-3 1z" fill="#1c1412"/><path d="M12 7.500 l3 0.500 l0 2.500 l-2.500 0z" fill="#e4c4b4"/><path d="M8 14 l3 -3 l1.500 1.500 l-3 4z" fill="#4a8080"/>
  <path d="M1 33 V26 h3 v-2 h5 v2 h3 v-2 h3 v3 h3 v-2 l4 -3 l4 2 V33z" fill="#8a7468"/><path d="M5 25h6v8h-6z" fill="#5a7c7c"/><path d="M17 27l9 -3v9h-9z" fill="#c86a40"/><path d="M1 29 h25 v4 h-25z" fill="#7a6a60" opacity="0.600"/>
</svg>
<span class="abs" style="left:903px;top:466px;font-size:12px;line-height:16px;font-style:italic;color:#f0f0f0;transform:skewX(-8deg)">背景</span>
<svg class="abs" style="left:1029px;top:466px" width="12" height="15" viewBox="0 0 12 15"><rect x="1.500" y="6.500" width="9" height="7" fill="none" stroke="#c8c8c8" stroke-width="1.200"/><path d="M3.500 6.500 V4.500 a2.500 2.500 0 0 1 5 0 V6.500" fill="none" stroke="#c8c8c8" stroke-width="1.300"/><rect x="5.300" y="8.500" width="1.400" height="3" fill="#c8c8c8"/></svg>
<div id="tab" class="abs">pexels-photo-3039185.jpeg @ 110%(RGB/8) *<svg style="position:absolute;left:267px;top:6px" width="8" height="8" viewBox="0 0 8 8"><path d="M1 1 L7 7 M7 1 L1 7" stroke="#dcdcdc" stroke-width="1.600"/></svg></div>
<!-- photo -->
<svg id="photo" class="abs" style="left:130px;top:210px" width="550" height="469" viewBox="130 210 550 469">
<defs>
<linearGradient id="botg" x1="0" y1="0" x2="0" y2="1"><stop offset="0" stop-color="#30bad0"/><stop offset="0.200" stop-color="#48c2d6"/><stop offset="0.650" stop-color="#54c8da"/><stop offset="0.800" stop-color="#66d0e0"/><stop offset="1" stop-color="#7cdae8"/></linearGradient>
</defs>
<rect x="130" y="210" width="550" height="469" fill="#1cb0c8"/>
<!-- right darker patch -->
<path d="M603 226 H680 V394 H640 V372 H606 V330 L590 300 L600 262z" fill="#12a9c3"/>
<!-- bottom bands -->
<path d="M130 556 L300 564 L400 571 L680 578 V679 H130z" fill="#34bbd1"/>
<path d="M130 572 L300 582 L400 591 L680 599 V679 H130z" fill="#4cc4d8"/>
<!-- left mid region -->
<path d="M130 210 H337 L321 253 L304 285 L295 318 L286 355 L268 385 L254 405 L250 440 L257 475 L278 510 L288 556 L296 584 L130 584z" fill="#4cb9cf"/>
<!-- left lighter -->
<path d="M130 210 H146 L150 280 L160 345 L195 435 L244 505 L286 554 L330 600 L420 642 L480 656 L130 660z" fill="#56c6da"/>
<path d="M130 210 H156 L150 236 L141 256 L138 300 L130 330z" fill="#68d0e0"/>
<path d="M130 470 L170 515 L230 570 L300 612 L400 646 L130 650z" fill="#5ecbdd"/>
<path d="M130 612 L220 625 L300 637 L400 648 L680 655 V679 H130z" fill="#64cfdf"/>
<path d="M130 648 L220 658 L300 667 L420 676 L480 679 H130z" fill="#78d8e6"/>
<!-- figure -->
<g id="figure">
<!-- left shoe -->
<ellipse cx="304" cy="528" rx="15" ry="11" fill="#2a1a16" transform="rotate(25 304 528)"/>
<!-- right arm (viewer right) -->
<path d="M440 352 L462 342 L500 330 L534 321 L566 317 L573 308 L577 302 L586 296 L594 294 L603 297 L608 301 L604 306 L598 312 L590 320 L582 326 L573 330 L545 338 L518 348 L486 357 L467 363 L455 372z" fill="#cf8a62"/>
<path d="M455 372 L467 363 L486 357 L518 348 L545 338 L566 331 L545 334 L510 343 L480 350 L458 358z" fill="#a9643e"/>
<path d="M440 352 L462 342 L500 330 L480 340 L455 350z" fill="#e8b89a"/>
<path d="M566 316 L571 313 L575 329 L569 331z" fill="#151010"/>
<path d="M524 330 l1.500 10 M528 329 l1.500 10 M532 328 l1.500 10 M536 327 l1.500 10 M540 326 l1.500 10 M544 325 l1.500 10" stroke="#3a1c14" stroke-width="1.300"/>
<path d="M577 303 L590 296 L603 298 L596 306 L586 312 L579 318z" fill="#d89878"/>
<!-- pants -->
<path d="M447 427 L456 418 L465 414 L474 417 L482 425 L504 446 L515 458 L521 470 L519 488 L508 502 L490 510 L468 513 L445 511 L428 505 L418 498 L414 488 L420 470 L432 448z" fill="#17110f"/>
<path d="M509 460 L517 462 L505 492 L498 489z" fill="#4a4a50"/>
<path d="M470 416 L480 424 L500 446 L512 460 L505 470 L490 450 L474 432 L462 420z" fill="#2a1f1c"/>
<path d="M457 423 L460 416 L466 413 L472 416 L476 424 L468 421z" fill="#d8a084"/>
<path d="M510 455 L517 460 L518 474 L514 486 L510 476z" fill="#c88a68"/>
<!-- tank top -->
<path d="M389 381 L402 384 L416 382 L426 372 L428 352 L440 352 L452 358 L465 369 L472 386 L482 402 L493 418 L504 440 L511 453 L505 448 L482 425 L474 417 L465 414 L456 418 L447 427 L440 440 L432 455 L426 470 L420 462 L416 440 L410 418 L400 398z" fill="#d9a692"/>
<path d="M389 381 L402 384 L416 382 L426 372 L428 352 L432 352 L431 374 L420 387 L404 390 L392 386z" fill="#b88070"/>
<path d="M440 352 L452 358 L465 369 L472 386 L460 372 L450 362z" fill="#b88070"/>
<path d="M400 398 L410 418 L416 440 L420 462 L426 470 L430 456 L424 436 L418 414 L408 396z" fill="#b98572"/>
<path d="M428 392 L450 396 L470 388 L484 412 L470 414 L456 418 L446 428 L436 440 L430 420z" fill="#e2b4a2"/>
<path d="M430 395 Q450 400 468 388" fill="none" stroke="#b88474" stroke-width="1.500"/>
<path d="M482 402 L493 418 L504 440 L511 453 L500 444 L492 426z" fill="#e6bcaa"/>
<!-- neck / chest -->
<path d="M404 388 L418 386 L428 374 L429 358 L418 370 L408 380z" fill="#c47c5a"/>
<!-- head -->
<path d="M372 340 L380 334 L392 330 L404 332 L412 338 L418 348 L421 360 L418 372 L410 380 L400 384 L392 382 L386 374 L380 362 L374 350z" fill="#c98a68"/>
<!-- beard -->
<path d="M392 382 L400 384 L410 380 L418 372 L421 360 L416 352 L413 364 L406 372 L398 370 L392 372 L388 376z" fill="#3b241a"/>
<path d="M394 368 q5 -3 10 0 l-1 3 q-4 -2 -8 0z" fill="#a0503c"/>
<!-- hair -->
<path d="M350 310 L352 303 L358 300 L364 303 L369 298 L377 301 L385 298 L393 300 L400 305 L406 312 L411 320 L414 330 L413 341 L407 337 L399 334 L389 334 L381 338 L375 345 L373 354 L367 348 L362 338 L356 331 L351 323 L353 316z" fill="#38241c"/>
<path d="M353 306 L362 303 L370 307 L364 313 L357 318 L352 313z M377 303 L388 301 L394 308 L386 315 L377 313z M366 318 L378 316 L384 322 L374 328 L366 326z" fill="#74503c"/>
<path d="M395 312 L404 316 L408 326 L400 322z" fill="#5a3c2e"/>
<path d="M413 339 L418 337 L421 347 L417 353z" fill="#c98a68"/>
<!-- sunglasses -->
<ellipse cx="384" cy="367" rx="6" ry="3.500" fill="#d42c2c" transform="rotate(-20 384 367)"/>
<ellipse cx="400" cy="359" rx="6" ry="3.500" fill="#d42c2c" transform="rotate(-20 400 359)"/>
<path d="M378 366 L406 354 L414 344" fill="none" stroke="#5a2a20" stroke-width="1.200"/>
<!-- left arm -->
<path d="M389 381 L400 398 L408 412 L404 424 L396 432 L384 442 L372 456 L360 472 L348 488 L340 500 L330 506 L322 498 L322 488 L330 480 L338 462 L346 444 L356 424 L366 406 L376 392z" fill="#cf8a62"/>
<path d="M389 381 L376 392 L366 406 L356 424 L346 444 L338 462 L330 480 L336 476 L346 458 L356 440 L368 420 L380 402z" fill="#eccdb8"/>
<path d="M400 398 L408 412 L404 424 L396 432 L384 442 L372 456 L376 440 L386 424 L394 410z" fill="#9c5a3c"/>
<path d="M372 418 L380 412 L386 418 L376 434 L366 444 L364 434z" fill="#6a4434"/>
<!-- skateboard -->
<path d="M400 429 Q414 430 422 444 Q429 456 425 466 L394 513 L369 547 L337 590 Q326 606 312 606 Q298 602 292 588 Q284 572 290 558 L321 516 L346 478 L372 440 Q384 428 400 429z" fill="#4f8a8c"/>
<path d="M400 429 Q414 430 422 444 Q429 456 425 466 L412 486 L396 472 L380 456 L368 446 L372 440 Q384 428 400 429z" fill="#e05e44"/>
<path d="M386 442 L396 436 L402 444 L396 452z M404 440 L414 446 L410 456 L402 452z M398 458 L408 462 L412 474 L402 470z" fill="#f2b8a4"/>
<path d="M380 452 L392 448 L418 470 L414 480z" fill="#e8ece8"/>
<path d="M400 429 Q414 430 422 444 Q429 456 425 466 L394 513 L369 547 L337 590 Q326 606 312 606 L318 601 Q328 599 334 587 L366 544 L391 510 L421 464 Q425 452 417 442 Q410 432 400 432z" fill="#c48664"/>
<!-- upper teal w/ truck -->
<path d="M362 452 L376 446 L410 490 L396 510 L350 478z" fill="#5a9c9c"/>
<path d="M350 470 L358 464 L404 492 L398 500z" fill="#e8e8e4"/>
<ellipse cx="354" cy="469" rx="8" ry="6.500" fill="#e8c49c" transform="rotate(-35 354 469)"/>
<ellipse cx="352" cy="470" rx="4" ry="3" fill="#c89870" transform="rotate(-35 352 470)"/>
<ellipse cx="403" cy="500" rx="8" ry="6.500" fill="#d8b088" transform="rotate(-35 403 500)"/>
<path d="M366 470 L384 476 L396 496 L376 490z" fill="#f4f4f0"/>
<path d="M372 476 l10 4 l4 8 l-10 -4z" fill="#a8b4b4"/>
<!-- middle dark w/ bones -->
<path d="M334 500 L352 484 L392 510 L368 546 L330 530z" fill="#2c4a52"/>
<path d="M352 498 L366 492 L384 506 L372 522 L356 514z" fill="#3c7078"/>
<path d="M318 548 L340 512 L348 516 L328 554z" fill="#eef0ee"/>
<path d="M340 522 L382 514 L384 521 L346 532z" fill="#e4e8e6"/>
<path d="M356 530 L376 524 L372 540 L360 546z" fill="#1a1a1c"/>
<!-- teeth zone -->
<path d="M330 536 L372 548 L360 566 L322 552z" fill="#181818"/>
<path d="M330 542 l6.500 2 l-2.500 7 l-6.500 -2z M339 545 l6.500 2 l-2.500 7 l-6.500 -2z M348 548 l6.500 2 l-2.500 7 l-6.500 -2z M357 551 l6.500 2 l-2.500 7 l-6.500 -2z" fill="#ecd4a4"/>
<path d="M336 556 L344 562 L350 576 L346 590 L338 582 L334 568z" fill="#cc3a2a"/>
<path d="M308 540 l5 -6 l4 6 l-5 8z" fill="#c84030"/>
<!-- lower teal and tail truck -->
<path d="M296 560 L312 548 L340 584 L326 602 L306 598z" fill="#5a9494"/>
<ellipse cx="290" cy="560" rx="8" ry="6.500" fill="#d8a878" transform="rotate(-35 290 560)"/>
<ellipse cx="288" cy="561" rx="4" ry="3" fill="#b07848" transform="rotate(-35 288 561)"/>
<path d="M294 564 L304 557 L328 578 L320 587z" fill="#e8e8e4"/>
<path d="M304 566 l10 8 l-4 5 l-10 -8z" fill="#9aa8a8"/>
<ellipse cx="322" cy="591" rx="7" ry="5.500" fill="#c48a60" transform="rotate(-35 322 591)"/>
<path d="M300 582 l8 8 l-4 6 l-8 -10z" fill="#2c4a52"/>
<!-- left hand -->
<path d="M322 488 L334 484 L344 492 L350 504 L346 516 L336 520 L328 516 L322 506z" fill="#c4805c"/>
<path d="M334 498 l8 14 M330 500 l6 16 M338 494 l8 12" stroke="#9a5438" stroke-width="1.200"/>
<!-- right shoe -->
<path d="M408 486 L420 492 L418 508 L408 524 L396 532 L388 524 L394 508z" fill="#1c1412"/>
<path d="M416 470 L426 466 L432 478 L422 494 L410 488z" fill="#b87858"/>
</g>
<!-- buildings at bottom -->
<path d="M228 679 V676 H240 V679z M298 679 V673 H336 V679z" fill="#8a8078"/>
<path d="M300 676 H334" stroke="#5a5a60" stroke-width="1.500"/>
</svg>
<!-- flyout -->
<div class="abs" id="flyout" style="left:33px;top:147px;width:162px;height:65px;background:#2f2f2f;border:1px solid #0a0a0a"></div>
<div class="abs" style="left:36px;top:169px;width:156px;height:19px;background:#4a536b"></div>
<div class="abs" style="left:42px;top:175px;width:4px;height:4px;background:#e8e8e8"></div>
<svg class="abs" style="left:54px;top:149px" width="22" height="60" viewBox="54 149 22 60">
  <ellipse cx="64" cy="156.500" rx="7.500" ry="4.800" fill="none" stroke="#c4c4c4" stroke-width="1.300" transform="rotate(-8 64 156.500)"/><path d="M58.500 160 C57 162 58 163.500 60 163 C61 162.500 60.500 161 59.500 161.500 L58.500 164" fill="none" stroke="#c4c4c4" stroke-width="1"/>
  <path d="M56 171 L62 176 L70.500 170 L69 180 L59.500 181 Z" fill="none" stroke="#dcdcdc" stroke-width="1.300"/><path d="M59.500 180.500 L58.500 183.500 L61.500 184" fill="none" stroke="#cfcfcf" stroke-width="1"/>
  <path d="M57 190 L62 194 L66 191 M57 190 L60 200.500 L69 199.500" fill="none" stroke="#c4c4c4" stroke-width="1.300"/><path d="M60 200 L59 203 L62 203.500" fill="none" stroke="#c4c4c4" stroke-width="1"/><path d="M64 192 h4 a3 3 0 0 1 0 6.500 h-4 v-2.200 h4 a1 1 0 0 0 0 -2.100 h-4z" fill="#c4c4c4"/>
</svg>
<span class="abs fl" style="left:78px;top:150px">套索工具</span>
<span class="abs fl" style="left:78px;top:169px">多边形套索工具</span>
<span class="abs fl" style="left:78px;top:188px">磁性套索工具</span>
<span class="abs fl" style="left:179px;top:150px">L</span>
<span class="abs fl" style="left:179px;top:169px">L</span>
<span class="abs fl" style="left:179px;top:188px">L</span>
<svg class="abs" style="left:79px;top:175px" width="14" height="20" viewBox="0 0 14 20"><path d="M1.500 1 V16 L5 12.800 L7.500 18.500 L10 17.400 L7.500 12 H12.500z" fill="#ffffff" stroke="#101010" stroke-width="1" stroke-linejoin="round"/></svg>
</body>
</html>
